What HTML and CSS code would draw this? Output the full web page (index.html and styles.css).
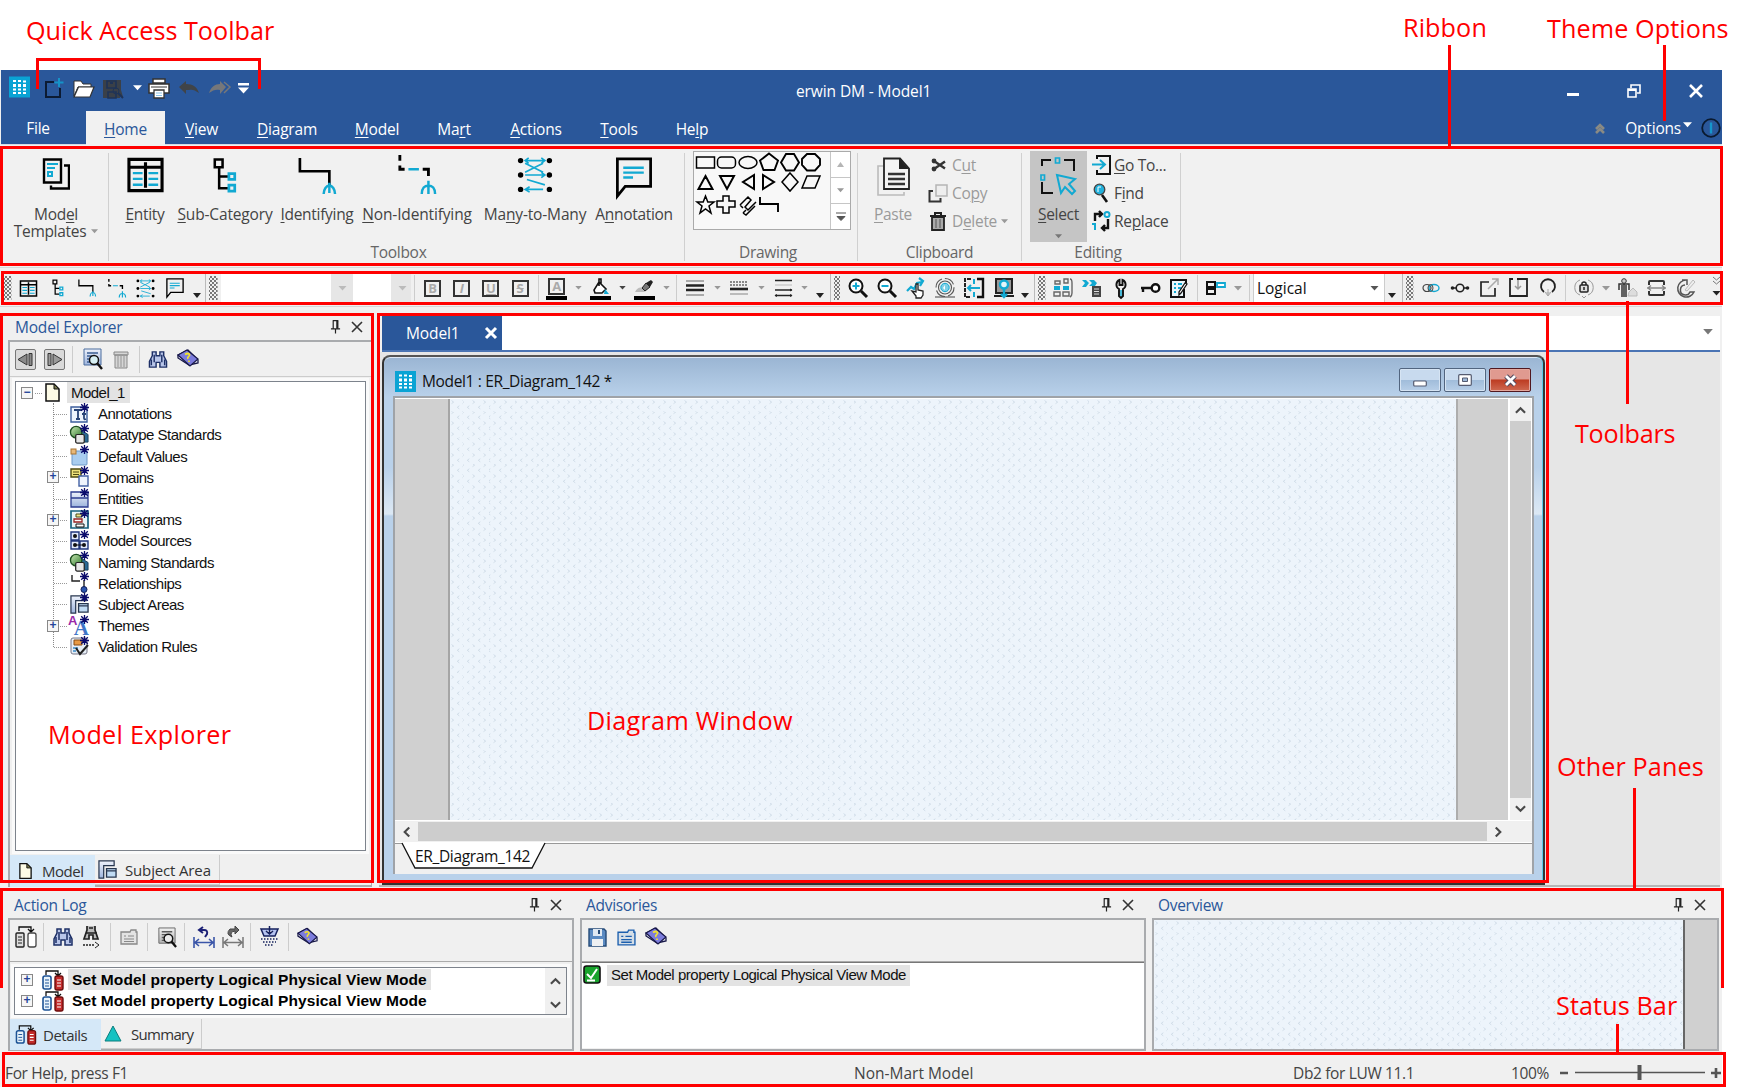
FILE: index.html
```html
<!DOCTYPE html>
<html lang="en">
<head>
<meta charset="utf-8">
<title>erwin DM - Model1</title>
<link rel="stylesheet" href="styles.css">
</head>
<body>
<svg class="defs" width="0" height="0" aria-hidden="true">
<defs>
<linearGradient id="gb" x1="0" y1="0" x2="0" y2="1"><stop offset="0" stop-color="#eef2fb"/><stop offset="1" stop-color="#9db4dd"/></linearGradient>
<linearGradient id="gg" x1="0" y1="0" x2="1" y2="1"><stop offset="0" stop-color="#c9e8b4"/><stop offset="1" stop-color="#2f7a2c"/></linearGradient>
<symbol id="logo" viewBox="0 0 21 21"><path fill="#0aa3d4" d="M0 0h21v21H0z"/><path fill="#fff" d="M4 3.500h3v2H4zM9 3.500h3v2H9zM14 4h3v2h-3zM4 7.500h3v3H4zM9 7.500h3v3H9zM14 7.500h3v3h-3zM4 12h3v2H4zM9 12h3v2H9zM14 12h3v2h-3zM4 15.500h3v2H4zM9 15.500h3v2H9zM14 15.500h3v2h-3z"/></symbol>
<symbol id="star" viewBox="0 0 9 9"><path d="M4.500 0v9M0 4.500h9M1.200 1.200l6.600 6.600M7.800 1.200L1.200 7.800" stroke="#0b0b6b" stroke-width="1.300"/></symbol>
<symbol id="entity" viewBox="0 0 38 36"><path d="M2 2h34v32H2zM2 10h34M19 5v26" fill="none" stroke="#000" stroke-width="3.200"/><path d="M6 16h10M6 22h10M6 28h10M22 16h10M22 22h10M22 28h10" stroke="#12a9d2" stroke-width="2.400"/></symbol>
<symbol id="subcat" viewBox="0 0 26 38"><path d="M2.500 2.500h8v8h-8zM7 11v21h9M7 20h9" fill="none" stroke="#000" stroke-width="2.600"/><path d="M17 17h6v6h-6zM17 29h6v6h-6z" fill="none" stroke="#12a9d2" stroke-width="2.800"/></symbol>
<symbol id="ident" viewBox="0 0 40 40"><path d="M2 1v14h31v15" fill="none" stroke="#000" stroke-width="2.800"/><path d="M33 27v11M27 39c0-5 3-9 6-9s6 4 6 9" fill="none" stroke="#12a9d2" stroke-width="2.600"/></symbol>
<symbol id="nonid" viewBox="0 0 40 42"><path d="M2 0v6M2 11v4h5M26 15h6v7" fill="none" stroke="#000" stroke-width="3"/><path d="M11 15h11M32 27v14M25 41c0-6 3-9 7-9s7 3 7 9" fill="none" stroke="#12a9d2" stroke-width="2.600"/></symbol>
<symbol id="many" viewBox="0 0 38 40"><path d="M8 4h22M8 7l20 10M28 7L8 17M8 20h22M30 31L10 25M8 36h20M26 1l4 3-4 3M12 1L8 4l4 3M26 17l4 3-4 3M13 33l-5 3 5 3" fill="none" stroke="#12a9d2" stroke-width="1.800"/><g fill="#000"><circle cx="3" cy="4" r="3"/><circle cx="35" cy="4" r="3"/><circle cx="3" cy="20" r="3"/><circle cx="35" cy="20" r="3"/><circle cx="3" cy="36" r="3"/><circle cx="35" cy="36" r="3"/></g></symbol>
<symbol id="annot" viewBox="0 0 38 44"><path d="M2 2h34v28H10L2 40z" fill="none" stroke="#000" stroke-width="2.800"/><path d="M8 11h21M8 16h21M8 21h10" stroke="#12a9d2" stroke-width="2.400"/></symbol>
<symbol id="templ" viewBox="0 0 28 32"><path d="M2 2h17v23H2zM22 8h5v23H9v-3" fill="none" stroke="#000" stroke-width="2.400"/><path d="M5 6.500h11M5 10.500h8M6 14.500h4v4H6z" fill="none" stroke="#12a9d2" stroke-width="2"/></symbol>
<symbol id="pin" viewBox="0 0 12 16"><path d="M3 1h6M3.500 1v9M1 10h10M6 10v5" fill="none" stroke="#222" stroke-width="1.300"/><path d="M8 1v9" stroke="#222" stroke-width="2.400"/></symbol>
<symbol id="x" viewBox="0 0 12 12"><path d="M1 1l10 10M11 1L1 11" stroke="currentColor" stroke-width="1.600"/></symbol>
<symbol id="dn" viewBox="0 0 8 5"><path d="M0 0h8L4 4.500z" fill="currentColor"/></symbol>
<symbol id="ovf" viewBox="0 0 8 5"><path d="M0 0h8L4 5z" fill="#222"/></symbol>
<symbol id="binoc" viewBox="0 0 20 20"><path d="M4 2h4v4h4V2h4v4l3 6v6h-7v-5H8v5H1v-6l3-6z" fill="#b9c6ea" stroke="#1d2f66" stroke-width="1.500"/><path d="M3 10v6M6 5v8M14 5v8M17 10v6" stroke="#1d2f66" stroke-width="1.500"/></symbol>
<symbol id="book" viewBox="0 0 22 20"><path d="M1 6l10-5 10 10v3l-9 2L1 9z" fill="#eceff8" stroke="#181848" stroke-width="1.300"/><path d="M1 6l9-5 11 9-8 7z" fill="#7c7cdc" stroke="#181848" stroke-width="1.200"/><path d="M8 5.500q3-2 4.500 0c1 2-3 2-1.500 4.500M12 11.500v1.500" fill="none" stroke="#f2e32b" stroke-width="1.700"/></symbol>
<symbol id="doc" viewBox="0 0 15 19"><path d="M1 1h8l5 5v12H1z" fill="#fdfbe6" stroke="#111" stroke-width="1.500"/><path d="M9 1v5h5z" fill="#77784a" stroke="#111"/></symbol>
<symbol id="find" viewBox="0 0 22 22"><path d="M3 1h17v16H3z" fill="url(#gb)" stroke="#4a6d9e"/><path d="M6 5h11M6 8h6M6 11h4M6 14h3" stroke="#3b5e92" stroke-width="1.400"/><circle cx="13" cy="12" r="4.500" fill="#d8f0f4" stroke="#111" stroke-width="1.500"/><path d="M16 15l5 6" stroke="#111" stroke-width="2.400"/></symbol>
<symbol id="subj" viewBox="0 0 20 20"><path d="M1 19V1h16v5H6v13z" fill="url(#gb)" stroke="#27364f" stroke-width="1.300"/><path d="M9 9h10v9H9zM9 11.500h10" fill="#c0dbf4" stroke="#27364f" stroke-width="1.400"/></symbol>
<symbol id="log" viewBox="0 0 22 22"><path d="M4 6V2h12v4M13 4l3 3 3-3" fill="none" stroke="#111" stroke-width="1.300"/><rect x="1" y="7" width="8" height="13" rx="2" fill="#e8f3fb" stroke="#1d5396" stroke-width="1.600"/><path d="M3 11h4M3 14h4M3 17h4" stroke="#1d5396"/><rect x="13" y="7" width="8" height="14" rx="2" fill="#c22b2b" stroke="#6d0d0d" stroke-width="1.400"/><path d="M15 11h4M15 14h4M15 17h4" stroke="#fff" stroke-width="1.200"/></symbol>
<symbol id="props" viewBox="0 0 18 16"><path d="M1 3h9l1-2h5v2h1v12H1z" fill="currentColor" fill-opacity=".12" stroke="currentColor" stroke-width="1.300"/><path d="M4 7h2M8 7h6M4 10h10M4 12.500h10" stroke="currentColor" stroke-width="1.200"/></symbol>
<symbol id="dtype" viewBox="0 0 22 20"><path d="M12 5l8 5v8h-8z" fill="#2b6a94" stroke="#163e5c"/><circle cx="7.500" cy="7.500" r="6" fill="url(#gg)" stroke="#1d4d1f" stroke-width="1.400"/><rect x="7" y="10" width="9" height="9" rx="1.500" fill="#e7e7e7" stroke="#222" stroke-width="1.300"/></symbol>
<symbol id="cl" viewBox="0 0 12 8"><path d="M1 7l5-5 5 5" fill="none" stroke="#4a4a4a" stroke-width="2.300"/></symbol>
</defs>
</svg>

<div class="app">
  <header class="title">
    <div class="qat">
      <svg class="q-logo" width="21" height="22"><use href="#logo"/></svg>
      <svg class="q-new" width="21" height="22" viewBox="0 0 21 22"><path d="M11 5H3v15h14v-9" fill="none" stroke="#0c1b33" stroke-width="2"/><path d="M16 1v9M11.500 5.500h9" stroke="#1593c8" stroke-width="2"/></svg>
      <svg class="q-open" width="22" height="18" viewBox="0 0 22 18"><path d="M1 16V1h7l2 3h8v3H5z" fill="#fff" stroke="#333"/><path d="M1 17L5.500 7H21l-4 10z" fill="#fff" stroke="#333" stroke-width="1.200"/></svg>
      <svg class="q-save" width="21" height="19" viewBox="0 0 21 19"><path d="M0 0h18v10l2 7-3-1v2H0z" fill="#3a4048"/><path d="M4 1h9v7H4zM5 12h8v6H5z" fill="none" stroke="#1f3357" stroke-width="1.600"/><circle cx="13" cy="11" r="3" fill="none" stroke="#1f3357"/><path d="M7 3h3M15 13l5 5" stroke="#1f3357" stroke-width="2"/></svg>
      <svg class="q-dd" width="9" height="6"><use href="#dn"/></svg>
      <svg class="q-print" width="22" height="21" viewBox="0 0 22 21"><path d="M5 1h12v4H5zM1 6h20v9H1z" fill="#fff" stroke="#333" stroke-width="1.500"/><path d="M3 9h16" stroke="#333"/><path d="M6 12h10v8H6z" fill="#fff" stroke="#333" stroke-width="1.300"/><path d="M8 15h6M8 17.500h6" stroke="#8bc3e8"/></svg>
      <svg class="q-undo" width="21" height="14" viewBox="0 0 21 14"><path d="M0 6L7 0v3c7 0 11 3 13 9-4-3-7-4-10-3H7v4z" fill="#404448"/></svg>
      <svg class="q-redo" width="22" height="14" viewBox="0 0 22 14"><path d="M17 6l-6-6v3C6 3 2 6 0 12c4-3 7-4 11-3v4z" fill="#76777a"/><path d="M15 1l6 5-6 6" fill="none" stroke="#76777a" stroke-width="1.500"/></svg>
      <svg class="q-more" width="11" height="11" viewBox="0 0 11 11"><path d="M0 0h11v2.500H0zM0 4.500h11L5.500 10.500z" fill="#fff"/></svg>
    </div>
    <div class="caption">erwin DM - Model1</div>
    <div class="wctl">
      <svg width="12" height="14" viewBox="0 0 12 14"><path d="M0 9h12v3H0z" fill="#fff"/></svg>
      <svg width="14" height="14" viewBox="0 0 14 14"><path d="M1 5h8v8H1zM4 4V1h9v8h-3" fill="none" stroke="#fff" stroke-width="1.600"/><path d="M1 6h8" stroke="#fff" stroke-width="2"/></svg>
      <svg width="14" height="14" viewBox="0 0 14 14"><path d="M1 1l12 12M13 1L1 13" stroke="#fff" stroke-width="2.600"/></svg>
    </div>
  </header>

  <nav class="tabs">
    <span class="t-file">File</span><span class="on"><u>H</u>ome</span><span class="t-view"><u>V</u>iew</span><span class="t-diag"><u>D</u>iagram</span><span class="t-model"><u>M</u>odel</span><span class="t-mart">Ma<u>r</u>t</span><span class="t-act"><u>A</u>ctions</span><span class="t-tools"><u>T</u>ools</span><span class="t-help">He<u>l</u>p</span>
    <div class="opts">
      <svg width="10" height="9" viewBox="0 0 10 9"><path d="M1 5l4-4 4 4M1 9l4-4 4 4" fill="none" stroke="#8a8a84" stroke-width="2.600"/></svg>
      <span>Options</span>
      <svg class="od" width="9" height="6"><use href="#dn"/></svg>
      <svg width="20" height="20" viewBox="0 0 20 20"><circle cx="10" cy="10" r="8.800" fill="none" stroke="#0a1a30" stroke-width="1.800"/><path d="M10 4.500v11" stroke="#1596cc" stroke-width="2.400"/></svg>
    </div>
  </nav>

  <section class="ribbon">
    <div class="rg g1">
      <div class="rb"><span class="ic"><svg width="28" height="33"><use href="#templ"/></svg></span><span class="l1t">Mod<u>e</u>l</span><span class="l2t">Templates<svg class="sm" width="7" height="5"><use href="#dn"/></svg></span></div>
      <div class="cap"></div>
    </div>
    <div class="rg g2">
      <div class="row">
        <div class="rb b1"><span class="ic"><svg width="37" height="36"><use href="#entity"/></svg></span><span><u>E</u>ntity</span></div>
        <div class="rb b2"><span class="ic"><svg width="26" height="37"><use href="#subcat"/></svg></span><span><u>S</u>ub-Category</span></div>
        <div class="rb b3"><span class="ic"><svg width="40" height="38"><use href="#ident"/></svg></span><span><u>I</u>dentifying</span></div>
        <div class="rb b4"><span class="ic up"><svg width="40" height="40"><use href="#nonid"/></svg></span><span><u>N</u>on-Identifying</span></div>
        <div class="rb b5"><span class="ic"><svg width="38" height="36" preserveAspectRatio="none"><use href="#many"/></svg></span><span>Ma<u>n</u>y-to-Many</span></div>
        <div class="rb b6"><span class="ic up"><svg width="38" height="43"><use href="#annot"/></svg></span><span>A<u>n</u>notation</span></div>
      </div>
      <div class="cap">Toolbox</div>
    </div>
    <div class="rg g3">
      <div class="gallery">
        <svg width="136" height="76" viewBox="0 0 136 76" fill="none" stroke="#000" stroke-width="1.500">
          <rect x="2.500" y="6" width="18" height="11"/><rect x="23.500" y="6" width="18" height="11" rx="4"/><ellipse cx="54" cy="11.500" rx="9" ry="6"/>
          <path stroke-width="1.900" d="M75 2.500l9 7-3.500 9.500h-11L66 9.500zM92 3h8l5 8.500-5 8h-8l-5-8zM113 3h8l5 5v6l-5 5.500h-8l-5-5.500V8z"/>
          <path stroke-width="2" d="M11.500 25l7 13h-14zM26 25h14l-7 13zM60 24v14l-11-7zM69 24v14l11-7z"/><path d="M96 22l8 9-8 9-8-9zM113 25h13l-5 12h-13z"/>
          <path d="M11.500 45l2.300 6h6.200l-5 4 2 7-5.500-4L6 62l2-7-5-4h6.200zM29 45h6v5h6v6h-6v6h-6v-6h-6v-6h6zM46 54l8-8 3 3-6 7 3 3 8-8M46 54l3 3M49 62l3 2 9-9M49 62l3-3"/><path stroke-width="1.900" d="M66 46v7h18v8"/>
        </svg>
        <div class="gs"><i><svg class="sm" width="7" height="5" viewBox="0 0 7 5"><path d="M0 5h7L3.500 0z" fill="#b5b5b5"/></svg></i><i><svg class="sm" width="7" height="5"><use href="#dn"/></svg></i><i><svg width="10" height="10" viewBox="0 0 10 10"><path d="M0 1h10M1 4.500h8L5 8.500z" fill="#555" stroke="#555"/></svg></i></div>
      </div>
      <div class="cap">Drawing</div>
    </div>
    <div class="rg g4">
      <div class="row">
        <div class="rb paste"><span class="ic"><svg width="33" height="40" viewBox="0 0 33 40"><path d="M6 9H1v29h26v-3" fill="none" stroke="#bbb" stroke-width="1.600"/><path d="M7 1.500h16l9 10V32H7z" fill="#f4f4f4" stroke="#222" stroke-width="1.800"/><path d="M22 1v11h10z" fill="#222"/><path d="M11 17h17M11 22h17M11 27h17" stroke="#333" stroke-width="2.600"/></svg></span><span><u>P</u>aste</span></div>
        <div class="col dis">
          <div><i><svg width="15" height="14" viewBox="0 0 15 14"><path d="M3 3l11 7.500M3 11l11-7.500" stroke="#333" stroke-width="2.400"/><circle cx="3" cy="3" r="2.400" fill="#333"/><circle cx="3" cy="11" r="2.400" fill="#333"/></svg></i><span>C<u>u</u>t</span></div>
          <div><i><svg width="20" height="19" viewBox="0 0 20 19"><path d="M8 1h11v11H8z" fill="#eee" stroke="#b5b5b5" stroke-width="1.500"/><path d="M5 7H1.500v10.500h11V14" fill="none" stroke="#333" stroke-width="2"/></svg></i><span>Co<u>p</u>y</span></div>
          <div><i><svg width="16" height="19" viewBox="0 0 16 19"><path d="M0 4h16M5 3V1h6v2" fill="none" stroke="#222" stroke-width="2"/><path d="M2 5h12v13H2z" fill="#aaa" stroke="#222" stroke-width="1.800"/><path d="M6 7v9M10 7v9" stroke="#555"/></svg></i><span>D<u>e</u>lete</span><svg class="sm" width="7" height="5"><use href="#dn"/></svg></div>
        </div>
      </div>
      <div class="cap">Clipboard</div>
    </div>
    <div class="rg g5">
      <div class="row">
        <div class="rb sel"><span class="ic"><svg width="37" height="38" viewBox="0 0 37 38"><path d="M2 9V3h9M24 3h10v11M2 25v11h11" fill="none" stroke="#111" stroke-width="2"/><path d="M15.500 1h4v5h-4zM1 18h3.500v5H1z" fill="none" stroke="#12a9d2" stroke-width="1.700"/><path d="M17 18l18 4-6 5 6 7-3 3-7-7-4 6z" fill="none" stroke="#12a9d2" stroke-width="2"/></svg></span><span><u>S</u>elect</span><svg class="sm" width="7" height="5"><use href="#dn"/></svg></div>
        <div class="col ed">
          <div><i><svg width="19" height="20" viewBox="0 0 19 20"><path d="M5 4V1h13v18H5v-4" fill="none" stroke="#111" stroke-width="2"/><path d="M0 9.500h12M8 5l5 4.500L8 14" fill="none" stroke="#12a9d2" stroke-width="2"/></svg></i><span><u>G</u>o To...</span></div>
          <div><i><svg width="16" height="20" viewBox="0 0 16 20"><circle cx="6.500" cy="6.500" r="5.300" fill="#22b1dc" stroke="#444" stroke-width="1.300"/><path d="M5 9V4h3" stroke="#fff" fill="none"/><path d="M9 12l5 7" stroke="#111" stroke-width="2.600"/></svg></i><span>F<u>i</u>nd</span></div>
          <div><i><svg width="19" height="20" viewBox="0 0 19 20"><path d="M3 10V3h6M7 0l3 3-3 3M16 8v9h-5M13 14l-3 3 3 3" fill="none" stroke="#111" stroke-width="2.400"/><circle cx="15" cy="3.500" r="2.500" fill="none" stroke="#12a9d2" stroke-width="2"/><path d="M3 12v7M0 13h3" stroke="#12a9d2" stroke-width="2"/></svg></i><span>Re<u>p</u>lace</span></div>
        </div>
      </div>
      <div class="cap">Editing</div>
    </div>
  </section>

  <section class="bars">
    <div class="tb k1"><b class="grip"></b>
      <i><svg width="19" height="17"><use href="#entity"/></svg></i>
      <i><svg width="14" height="18"><use href="#subcat"/></svg></i>
      <i><svg width="20" height="18"><use href="#ident"/></svg></i>
      <i><svg width="20" height="19"><use href="#nonid"/></svg></i>
      <i><svg width="19" height="19"><use href="#many"/></svg></i>
      <i><svg width="20" height="21"><use href="#annot"/></svg></i>
      <em><svg width="8" height="5"><use href="#ovf"/></svg></em>
    </div>
    <div class="tb k2"><b class="grip"></b>
      <div class="cb c1"><svg width="9" height="5"><use href="#dn"/></svg></div><div class="cb c2"><svg width="9" height="5"><use href="#dn"/></svg></div>
      <s></s>
      <i><span class="bx">B</span></i><i><span class="bx it">I</span></i><i><span class="bx un">U</span></i><i><span class="bx st">S</span></i>
      <s></s>
      <i class="ul"><span class="bx">A</span></i><em class="a"><svg width="7" height="4"><use href="#dn"/></svg></em>
      <i class="ul"><svg width="18" height="17" viewBox="0 0 18 17"><path d="M7 4l7 7-4 4H3l-1-3zM7 8V1h2v6" fill="#fff" stroke="#111" stroke-width="1.600"/><path d="M13 11l4 5h-5z" fill="#12a9d2"/></svg></i><em class="a dk"><svg width="7" height="4"><use href="#dn"/></svg></em>
      <i class="ul"><svg width="20" height="16" viewBox="0 0 20 16"><path d="M1 13q3-6 8-4l2 4z" fill="#bbb"/><path d="M8 9l4-5 4 4-5 4z" fill="#777" stroke="#222"/><path d="M12 4l5-3 2 2-3 5z" fill="#222"/></svg></i><em class="a"><svg width="7" height="4"><use href="#dn"/></svg></em>
      <s></s>
      <i><svg width="18" height="18" viewBox="0 0 18 18"><path d="M0 2h18M0 16h18" stroke="#aaa" stroke-width="2"/><path d="M0 6.500h18M0 11h18" stroke="#222" stroke-width="2.400"/></svg></i><em class="a"><svg width="7" height="4"><use href="#dn"/></svg></em>
      <i><svg width="18" height="18" viewBox="0 0 18 18"><path d="M0 3h18M0 6h18" stroke="#888" stroke-width="2" stroke-dasharray="2 1"/><path d="M0 10h18" stroke="#222" stroke-width="2.600"/><path d="M0 15h18" stroke="#bbb" stroke-width="2"/></svg></i><em class="a"><svg width="7" height="4"><use href="#dn"/></svg></em>
      <i><svg width="19" height="18" viewBox="0 0 19 18"><path d="M1 1.500h17M1 11h17M1 16.500h17" stroke="#222" stroke-width="1.500"/><path d="M1 6h17" stroke="#ccc" stroke-width="1.500"/><path d="M16 9.500l2.500 1.500-2.500 1.500zM16 15l2.500 1.500L16 18zM3 15L.5 16.500 3 18z" fill="#222"/></svg></i><em class="a"><svg width="7" height="4"><use href="#dn"/></svg></em>
      <em class="e2"><svg width="8" height="5"><use href="#ovf"/></svg></em>
    </div>
    <div class="tb k3"><b class="grip"></b>
      <i><svg width="20" height="20" viewBox="0 0 20 20"><circle cx="8" cy="8" r="6.500" fill="#fff" stroke="#111" stroke-width="2"/><path d="M8 4.500v7M4.500 8h7" stroke="#12a9d2" stroke-width="2"/><path d="M13 13l6 6" stroke="#111" stroke-width="3"/></svg></i>
      <i><svg width="20" height="20" viewBox="0 0 20 20"><circle cx="8" cy="8" r="6.500" fill="#fff" stroke="#111" stroke-width="2"/><path d="M4.500 8h7" stroke="#12a9d2" stroke-width="2"/><path d="M13 13l6 6" stroke="#111" stroke-width="3"/></svg></i>
      <i><svg width="18" height="20" viewBox="0 0 18 20"><path d="M0 13l4-4 3 2 3-6 5-1M12 0l4 3-3 5" fill="none" stroke="#12a9d2" stroke-width="2.200"/><path d="M9 18l-4-5 4 1V6h2v6l5 1v4l-2 3H9z" fill="#fff" stroke="#222" stroke-width="1.300"/></svg></i>
      <i><svg width="20" height="20" viewBox="0 0 20 20"><g fill="none" stroke="#555" stroke-width="1.100"><circle cx="10" cy="9.500" r="9" stroke-dasharray="11 3"/><circle cx="10" cy="9.500" r="6.500"/><path d="M0 19h20"/></g><circle cx="10" cy="9.500" r="4.200" fill="#7fd0e6" stroke="#12a9d2"/><path d="M8 10l2-3v5z" fill="#fff"/></svg></i>
      <i><svg width="20" height="20" viewBox="0 0 20 20"><path d="M7 1H1v18h6" fill="none" stroke="#222" stroke-width="2" stroke-dasharray="4 1"/><path d="M13 1h6v18h-6" fill="none" stroke="#111" stroke-width="2.400"/><path d="M10 1v5M10 14v5M4 10h12M7 7l-3 3 3 3" fill="none" stroke="#12a9d2" stroke-width="2"/></svg></i>
      <i><svg width="20" height="20" viewBox="0 0 20 20"><path d="M2 1h16v14H2zM0 18h20" fill="#999" stroke="#222" stroke-width="2"/><circle cx="10" cy="6.500" r="4" fill="#e3f5fa" stroke="#12a9d2" stroke-width="2.400"/><path d="M10 11v8M7 16l3 3 3-3" fill="none" stroke="#12a9d2" stroke-width="2.400"/></svg></i>
      <em><svg width="8" height="5"><use href="#ovf"/></svg></em>
    </div>
    <div class="tb k4"><b class="grip"></b>
      <i><svg width="20" height="20" viewBox="0 0 20 20"><path d="M1 8h6v4H1zM10 8h6v4h-6z" fill="#12a9d2"/><path d="M1 14h6v4H1zM10 14h6v4h-6zM2 3h5v3H2zM11 1h4v4h-4zM17 1q2 0 2 4v10q0 3-2 4" fill="none" stroke="#666" stroke-width="1.400"/></svg></i>
      <i><svg width="20" height="19" viewBox="0 0 20 19"><path d="M0 1h4l3 3-3 4H0l3-4zM7 1h5l3 3-2 3H7l3-3z" fill="#12a9d2"/><path d="M10 7h9v11h-9z" fill="#444"/><path d="M12 10h5M12 12.500h5M12 15h5" stroke="#ddd"/></svg></i>
      <i><svg width="12" height="19" viewBox="0 0 12 19"><path d="M4.500 1A5 5 0 0 0 4 10v7l2 2 2-2v-7a5 5 0 0 0-.5-9v5h-3z" fill="#eee" stroke="#111" stroke-width="1.900"/><path d="M6 11v6" stroke="#12a9d2" stroke-width="1.500"/></svg></i>
      <i><svg width="20" height="10" viewBox="0 0 20 10"><circle cx="14.500" cy="5" r="3.800" fill="#fff" stroke="#111" stroke-width="2.400"/><path d="M0 5h11M2 5v4" stroke="#111" stroke-width="2.400"/></svg></i>
      <i><svg width="19" height="19" viewBox="0 0 19 19"><path d="M14 10v8H1V1h15v3" fill="#eaf6fa" stroke="#111" stroke-width="2"/><path d="M4 5h2M8 5h4M4 9h2M8 9h3M4 13h2" stroke="#12a9d2" stroke-width="1.800"/><path d="M17 5l-6 9-2 2v-3l6-9z" fill="#fff" stroke="#111" stroke-width="1.300"/></svg></i>
      <s></s>
      <i><svg width="20" height="14" viewBox="0 0 20 14"><path d="M1 1h8v5H1zM1 8h8v5H1z" fill="none" stroke="#111" stroke-width="2"/><path d="M11 2h8v4h-8z" fill="#fff" stroke="#12a9d2" stroke-width="1.800"/></svg></i><em class="a"><svg width="8" height="5"><use href="#dn"/></svg></em>
      <s></s>
      <div class="lg">Logical<svg width="9" height="5"><use href="#dn"/></svg></div>
      <em><svg width="8" height="5"><use href="#ovf"/></svg></em>
    </div>
    <div class="tb k5"><b class="grip"></b>
      <i><svg width="18" height="10" viewBox="0 0 18 10"><ellipse cx="5" cy="5" rx="4" ry="3.500" fill="#eee" stroke="#444" stroke-width="1.200"/><ellipse cx="12" cy="5" rx="5" ry="3.500" fill="none" stroke="#12a9d2" stroke-width="1.400"/><ellipse cx="8.500" cy="5" rx="2.500" ry="3.500" fill="none" stroke="#444"/></svg></i>
      <i><svg width="20" height="10" viewBox="0 0 20 10"><circle cx="10" cy="5" r="3.800" fill="none" stroke="#222" stroke-width="1.600"/><path d="M1 5h5M14 5h5" stroke="#222" stroke-width="1.600"/><circle cx="2.500" cy="5" r="1.800" fill="#222"/><circle cx="17.500" cy="5" r="1.800" fill="#222"/></svg></i>
      <i><svg width="19" height="20" viewBox="0 0 19 20"><path d="M9 4H1v14h14v-8" fill="none" stroke="#222" stroke-width="1.700"/><path d="M8 11L18 1M12 1h6v6" fill="none" stroke="#aaa" stroke-width="1.500"/></svg></i>
      <i><svg width="19" height="20" viewBox="0 0 19 20"><path d="M4 1H1v17h17V1H8" fill="none" stroke="#222" stroke-width="1.800"/><path d="M9 2v9M6 8l3 3 3-3" fill="none" stroke="#999" stroke-width="1.500"/></svg></i>
      <i><svg width="18" height="20" viewBox="0 0 18 20"><path d="M5 14a7 7 0 1 1 8 0" fill="none" stroke="#222" stroke-width="1.800"/><path d="M9 11v7M6 14l3 4 3-4" fill="#ccc" stroke="#aaa"/></svg></i>
      <s></s>
      <i><svg width="20" height="20" viewBox="0 0 20 20"><path d="M6 2a8 8 0 0 0 0 15M14 2a8 8 0 0 1 0 15M8 18l2 2 2-2" fill="none" stroke="#999"/><rect x="6" y="7" width="8" height="7" rx="1" fill="#ddd" stroke="#222" stroke-width="1.500"/><path d="M8 7V5q2-2 4 0v2M10 9v3" fill="none" stroke="#222" stroke-width="1.500"/></svg></i><em class="a"><svg width="8" height="5"><use href="#dn"/></svg></em>
      <i><svg width="20" height="20" viewBox="0 0 20 20"><circle cx="6" cy="3" r="2.300" fill="#ccc" stroke="#333"/><path d="M1 12V6h10v6M4 7v12M6 6v13M8 7v12" fill="none" stroke="#333" stroke-width="1.500"/><path d="M10 18h9v-4l-4-4-4 4z" fill="#ddd" stroke="#bbb"/></svg></i>
      <i><svg width="20" height="16" viewBox="0 0 20 16"><path d="M2 5V2q0-1 1-1h13q1 0 1 1v3M2 11v3q0 1 1 1h13q1 0 1-1v-3" fill="none" stroke="#333" stroke-width="2"/><path d="M0 8h19M4 5.500L1 8l3 2.500M15 5.500L18 8l-3 2.500" fill="none" stroke="#888" stroke-width="1.400"/></svg></i>
      <i><svg width="19" height="20" viewBox="0 0 19 20"><path d="M9 2a8.500 8.500 0 1 0 8 12h-4a5 5 0 1 1-5-7M5 2h5v5" fill="none" stroke="#555" stroke-width="1.500"/><path d="M8 12l8-10 2 2-8 9z" fill="#eee" stroke="#bbb"/></svg></i>
      <em class="last"><svg width="9" height="20" viewBox="0 0 9 20"><path d="M1 1l3.500 3L8 1M1 5l3.500 3L8 5" fill="none" stroke="#777"/><path d="M.5 15h8l-4 4.500z" fill="#222"/></svg></em>
    </div>
  </section>

  <main class="work">
    <aside class="explorer">
      <div class="ph"><span>Model Explorer</span><svg class="p" width="11" height="16"><use href="#pin"/></svg><svg width="12" height="12"><use href="#x"/></svg></div>
      <div class="pbody">
        <div class="ptb">
          <i><svg width="21" height="21" viewBox="0 0 21 21"><rect x=".5" y=".5" width="20" height="20" rx="1.500" fill="#d9d9d9" stroke="#777"/><path d="M12 5v11L3 10.500zM14 4.500h3v12h-3z" fill="#8a8a8a" stroke="#333"/></svg></i>
          <i><svg width="21" height="21" viewBox="0 0 21 21"><rect x=".5" y=".5" width="20" height="20" rx="1.500" fill="#d9d9d9" stroke="#777"/><path d="M9 5v11l9-5.500zM4 4.500h3v12H4z" fill="#9a9a9a" stroke="#333"/></svg></i><s></s>
          <i><svg width="22" height="22"><use href="#find"/></svg></i>
          <i><svg width="16" height="19" viewBox="0 0 16 19"><path d="M1 2h14v3H1zM2 5h12v13H2z" fill="#d6d6d6" stroke="#888"/><path d="M5 6v11M8 6v11M11 6v11" stroke="#aaa" stroke-width="1.500"/></svg></i><s></s>
          <i><svg width="20" height="19"><use href="#binoc"/></svg></i>
          <i><svg width="22" height="20"><use href="#book"/></svg></i>
        </div>
        <div class="tree">
          <div class="tr root"><b class="ex">−</b><svg class="d" width="15" height="19"><use href="#doc"/></svg><span class="hl">Model_1</span></div>
          <div class="kids">
            <div class="tr"><b></b><i><svg width="19" height="19" viewBox="0 0 19 19"><path d="M1 3h16v15H1z" fill="#eef4fd" stroke="#3c5e9c" stroke-width="1.400"/><path d="M4 6h8M8 6v9M6 15h4M14 8v6q0 2 2 1M12 10h4" stroke="#274376" stroke-width="1.800" fill="none"/></svg><svg class="s" width="9" height="9"><use href="#star"/></svg></i>Annotations</div>
            <div class="tr"><b></b><i><svg width="21" height="19"><use href="#dtype"/></svg><svg class="s" width="9" height="9"><use href="#star"/></svg></i>Datatype Standards</div>
            <div class="tr"><b></b><i><svg width="19" height="19" viewBox="0 0 19 19"><rect x="2" y="4" width="15" height="14" rx="1" fill="#a9cdf0" stroke="#6c98c8"/><rect x="1" y="2" width="5" height="5" fill="#e8b878" stroke="#a87432"/></svg><svg class="s" width="9" height="9"><use href="#star"/></svg></i>Default Values</div>
            <div class="tr"><b class="ex">+</b><i><svg width="19" height="19" viewBox="0 0 19 19"><path d="M1 1h10v8H1z" fill="#efe27a" stroke="#4d4a12" stroke-width="1.400"/><path d="M3 4h6M3 6.500h6" stroke="#4d4a12"/><path d="M9 8h9v10H9z" fill="#eef4fd" stroke="#4462a4" stroke-width="1.400"/></svg><svg class="s" width="9" height="9"><use href="#star"/></svg></i>Domains</div>
            <div class="tr"><b></b><i><svg width="19" height="19" viewBox="0 0 19 19"><path d="M1 3h17v15H1z" fill="url(#gb)" stroke="#2d3d90" stroke-width="1.300"/><path d="M1 9h17" stroke="#2d3d90" stroke-width="1.500"/></svg><svg class="s" width="9" height="9"><use href="#star"/></svg></i>Entities</div>
            <div class="tr"><b class="ex">+</b><i><svg width="19" height="19" viewBox="0 0 19 19"><path d="M1 1h17v17H1z" fill="#e9f5f8" stroke="#16607e" stroke-width="1.700"/><path d="M6 4h6v3H6z" fill="#f1e38b" stroke="#4b4b19"/><path d="M4 9h8v3H4z" fill="#fff" stroke="#922" stroke-width="1.300"/><path d="M6 14h8v3H6z" fill="#fff" stroke="#111"/></svg><svg class="s" width="9" height="9"><use href="#star"/></svg></i>ER Diagrams</div>
            <div class="tr"><b></b><i><svg width="19" height="19" viewBox="0 0 19 19"><path d="M1 1h8v8H1zM1 10h8v8H1zM10 10h8v8h-8z" fill="#e1e9fa" stroke="#20367d" stroke-width="1.400"/><g fill="#111"><circle cx="5" cy="5" r="2"/><circle cx="5" cy="14" r="2"/><circle cx="14" cy="14" r="2"/></g><path d="M5 14h9" stroke="#111"/></svg><svg class="s" width="9" height="9"><use href="#star"/></svg></i>Model Sources</div>
            <div class="tr"><b></b><i><svg width="21" height="19"><use href="#dtype"/></svg><svg class="s" width="9" height="9"><use href="#star"/></svg></i>Naming Standards</div>
            <div class="tr"><b></b><i><svg width="19" height="19" viewBox="0 0 19 19"><path d="M2 1v6h8M14 6v8" fill="none" stroke="#222" stroke-width="1.400"/><circle cx="14" cy="15.500" r="3" fill="#2b55ae" stroke="#111d58"/></svg><svg class="s" width="9" height="9"><use href="#star"/></svg></i>Relationships</div>
            <div class="tr"><b></b><i><svg width="19" height="19"><use href="#subj"/></svg><svg class="s" width="9" height="9"><use href="#star"/></svg></i>Subject Areas</div>
            <div class="tr"><b class="ex">+</b><i class="th"><em>A</em><strong>A</strong><svg class="s" width="9" height="9"><use href="#star"/></svg></i>Themes</div>
            <div class="tr"><b></b><i><svg width="19" height="19" viewBox="0 0 19 19"><rect x="1" y="1" width="16" height="16" rx="2" fill="#e6eef6" stroke="#778"/><path d="M4 3h8v5H4z" fill="#e89a45" stroke="#8a4c14"/><path d="M3 11h5M3 14h3" stroke="#3a8ac8" stroke-width="1.500"/><path d="M6 11l4 6 8-9" fill="none" stroke="#222" stroke-width="2"/></svg><svg class="s" width="9" height="9"><use href="#star"/></svg></i>Validation Rules</div>
          </div>
        </div>
        <div class="btabs"><span class="on"><svg width="13" height="18"><use href="#doc"/></svg>Model</span><span class="off sa"><svg width="19" height="19"><use href="#subj"/></svg>Subject Area</span></div>
      </div>
    </aside>

    <section class="mdi">
      <div class="dtabs"><span>Model1<svg width="12" height="12" viewBox="0 0 12 12"><path d="M1 1l10 10M11 1L1 11" stroke="#fff" stroke-width="3"/></svg></span><em><svg width="10" height="6"><use href="#dn"/></svg></em></div>
      <div class="area">
        <div class="win">
          <div class="wt"><svg width="21" height="21"><use href="#logo"/></svg><span>Model1 : ER_Diagram_142 *</span>
            <b><svg width="14" height="8" viewBox="0 0 14 8"><rect x=".7" y="2" width="12.600" height="5" rx="1" fill="#fff" stroke="#555b70" stroke-width="1.200"/></svg></b>
            <b><svg width="14" height="12" viewBox="0 0 14 12"><rect x=".7" y=".7" width="12.600" height="10.600" rx="1" fill="#fff" stroke="#555b70" stroke-width="1.200"/><path d="M4.500 4h5v3.500h-5z" fill="#9db8d6" stroke="#555b70"/></svg></b>
            <b class="rd"><svg width="15" height="13" viewBox="0 0 15 13"><path d="M3 2l9 9M12 2l-9 9" stroke="#554a5c" stroke-width="5"/><path d="M3 2l9 9M12 2l-9 9" stroke="#fff" stroke-width="2.800"/></svg></b>
          </div>
          <div class="wc">
            <div class="view">
              <div class="gut l"></div><div class="dots"></div><div class="gut r"></div>
              <div class="vs"><i><svg width="11" height="8"><use href="#cl"/></svg></i><b></b><i class="f"><svg width="11" height="8"><use href="#cl"/></svg></i></div>
            </div>
            <div class="hs"><i class="tl"><svg width="11" height="8"><use href="#cl"/></svg></i><b></b><i class="trt"><svg width="11" height="8"><use href="#cl"/></svg></i></div>
            <div class="sheet"><svg width="144" height="26" viewBox="0 0 144 26"><path d="M0-1l13 25h117L143-1z" fill="#fff"/><path d="M0-1l13 25h117L143-1" fill="none" stroke="#111" stroke-width="1.300"/></svg><span>ER_Diagram_142</span></div>
          </div>
        </div>
      </div>
    </section>
  </main>

  <section class="panes">
    <div class="pane alog">
      <div class="ph"><span>Action Log</span><svg class="p" width="11" height="16"><use href="#pin"/></svg><svg width="12" height="12"><use href="#x"/></svg></div>
      <div class="pb">
        <div class="ptb">
          <i><svg width="22" height="24" viewBox="0 0 22 24"><path d="M4 6V2h12v4M13 4l3 3 3-3" fill="none" stroke="#111" stroke-width="1.300"/><rect x="1" y="8" width="8" height="14" rx="1" fill="#ddd" stroke="#222" stroke-width="1.400"/><rect x="13" y="8" width="8" height="14" rx="2" fill="#fff" stroke="#444" stroke-width="1.300"/><path d="M3 12h4M3 15h4M3 18h4" stroke="#222"/></svg></i><s></s>
          <i><svg width="20" height="20"><use href="#binoc"/></svg></i>
          <i><svg width="17" height="24" viewBox="0 0 17 24"><path d="M4 1v4L1 14h5v-4h4v4h5L12 5V1M6 3h4M3 8h11" fill="#bbb" stroke="#222" stroke-width="1.700"/><path d="M0 20h12" stroke="#222" stroke-width="1.500" stroke-dasharray="2 1"/><path d="M12 17l4 3-4 3" fill="none" stroke="#222"/></svg></i><s></s>
          <i class="gy"><svg width="18" height="16"><use href="#props"/></svg></i><s></s>
          <i class="mono"><svg width="21" height="21"><use href="#find"/></svg></i><s></s>
          <i><svg width="22" height="24" viewBox="0 0 22 24"><path d="M1 12v11M21 12v11M3 17.500h16M6 14l-4 3.500L6 21M16 14l4 3.500-4 3.500" fill="none" stroke="#3a55a8" stroke-width="1.600"/><path d="M10 2L6 5l4 3M7 5h4q4 0 3 4l-2 3" fill="none" stroke="#1c2176" stroke-width="2"/></svg></i>
          <i><svg width="22" height="24" viewBox="0 0 22 24"><path d="M1 12v11M21 12v11M3 17.500h16M6 14l-4 3.500L6 21M16 14l4 3.500-4 3.500" fill="none" stroke="#777" stroke-width="1.500"/><path d="M10 12Q3 9 8 4h5V1l4 4-4 4V6Q7 7 10 12z" fill="#666" stroke="#444"/></svg></i><s></s>
          <i><svg width="19" height="22" viewBox="0 0 19 22"><path d="M1 3h17l-3 7H4zM9.500 0v8M6 5l3.500 3L13 5" fill="#b4c2f0" stroke="#14205c" stroke-width="1.500"/><path d="M1 13h17M3 16h13M5 19h9" stroke="#14205c" stroke-width="1.400" stroke-dasharray="1.500 1.500"/></svg></i><s></s>
          <i><svg width="21" height="20"><use href="#book"/></svg></i>
        </div>
        <div class="list">
          <div class="items">
            <div><b class="ex">+</b><svg width="22" height="22"><use href="#log"/></svg><span class="hl">Set Model property Logical Physical View Mode</span></div>
            <div><b class="ex">+</b><svg width="22" height="22"><use href="#log"/></svg><span>Set Model property Logical Physical View Mode</span></div>
          </div>
          <div class="lsb"><svg width="11" height="8"><use href="#cl"/></svg><svg class="f" width="11" height="8"><use href="#cl"/></svg></div>
        </div>
        <div class="btabs"><span class="on"><svg width="22" height="21"><use href="#log"/></svg>Details</span><span class="off su"><svg width="18" height="17" viewBox="0 0 18 17"><path d="M9 1l8 15H1z" fill="#14c2c2" stroke="#0b7d7d"/></svg>Summary</span></div>
      </div>
    </div>
    <div class="pane adv">
      <div class="ph"><span>Advisories</span><svg class="p" width="11" height="16"><use href="#pin"/></svg><svg width="12" height="12"><use href="#x"/></svg></div>
      <div class="pb">
        <div class="ptb">
          <i><svg width="19" height="19" viewBox="0 0 19 19"><path d="M1 1h15l2 2v15H1z" fill="#5a8ac2" stroke="#264b78" stroke-width="1.400"/><path d="M5 1h9v7H5z" fill="#dfe8f2"/><path d="M11 2v4" stroke="#264b78" stroke-width="2"/><path d="M4 11h11v7H4z" fill="#eef0f2"/></svg></i>
          <i class="bl"><svg width="19" height="17"><use href="#props"/></svg></i>
          <i><svg width="22" height="20"><use href="#book"/></svg></i>
        </div>
        <div class="alist"><svg width="18" height="19" viewBox="0 0 18 19"><rect x="1" y="1" width="16" height="17" rx="2.500" fill="#18a32c" stroke="#111" stroke-width="1.600"/><path d="M4 9l4 4 6-9M4 15.500h8" fill="none" stroke="#fff" stroke-width="2"/></svg><span class="hl">Set Model property Logical Physical View Mode</span></div>
      </div>
    </div>
    <div class="pane over">
      <div class="ph"><span>Overview</span><svg class="p" width="11" height="16"><use href="#pin"/></svg><svg width="12" height="12"><use href="#x"/></svg></div>
      <div class="pb"><div class="dots"></div><div class="gut"></div></div>
    </div>
  </section>

  <footer class="status">
    <span class="s1">For Help, press F1</span><span class="s2">Non-Mart Model</span><span class="s3">Db2 for LUW 11.1</span><span class="s4">100%</span>
    <svg width="160" height="18" viewBox="0 0 160 18"><path d="M0 9h8M151 9h10M156 4v10" stroke="#555" stroke-width="2.600"/><path d="M15 8.500h130" stroke="#555" stroke-width="1.500"/><path d="M79.500 1v15" stroke="#555" stroke-width="4"/></svg>
  </footer>
</div>

<div class="notes">
  <div class="box n-rib"></div><div class="box n-bar"></div><div class="box n-exp"></div><div class="box n-dia"></div><div class="box n-pan"></div><div class="box n-sta"></div><div class="box n-qat"></div>
  <div class="ln l1"></div><div class="ln l2"></div><div class="ln l3"></div><div class="ln l4"></div><div class="ln l5"></div>
  <span class="x1">Quick Access Toolbar</span><span class="x2">Ribbon</span><span class="x3">Theme Options</span><span class="x4">Toolbars</span><span class="x5">Model Explorer</span><span class="x6">Diagram Window</span><span class="x7">Other Panes</span><span class="x8">Status Bar</span>
</div>
</body>
</html>
```
FILE: styles.css
```css
* { box-sizing: border-box; }
body { margin: 0; background: #fff; width: 1758px; height: 1087px; overflow: hidden; position: relative; font: 15.5px/18px "Open Sans", "Noto Sans", sans-serif; letter-spacing: -.3px; color: #444; }
svg { display: block; overflow: visible; flex: none; }
.defs { position: absolute; }
i, em, b { font-style: normal; flex: none; }
u { text-underline-offset: 2px; text-decoration-thickness: 1px; }
.app { width: 1722px; margin-top: 70px; height: 1017px; background: #f0f0f0; display: flex; flex-direction: column; }
.sm { color: #999; display: inline-block; vertical-align: middle; }

.title { height: 37px; flex: none; margin-left: 1px; background: #2a579a; color: #fff; display: flex; align-items: center; padding-top: 4px; }
.qat { display: flex; align-items: center; width: 795px; padding-left: 8px; height: 26px; margin-top: -5px; color: #fff; }
.q-logo { margin-top: -3px; }
.q-new { margin-left: 13px; }
.q-open { margin: 2px 0 0 9px; }
.q-save { margin: 2px 0 0 8px; }
.q-dd { margin-left: 9px; }
.q-print { margin-left: 6px; }
.q-undo { margin-left: 9px; }
.q-redo { margin-left: 9px; }
.q-more { margin-left: 7px; }
.caption { width: 771px; letter-spacing: -.1px; }
.wctl { display: flex; gap: 48px; align-items: center; }

.tabs { height: 38px; flex: none; margin-left: 1px; background: #2a579a; color: #fff; display: flex; padding-top: 4px; border-bottom: 1px solid #d5dbe4; }
.tabs > span { text-align: center; line-height: 36px; height: 33px; flex: none; letter-spacing: -.2px; }
.tabs .t-file { width: 74px; margin-right: 11px; line-height: 34px; }
.tabs .on { width: 79px; background: #f1f1f1; color: #2a579a; height: 34px; }
.t-view { width: 73px; } .t-diag { width: 98px; } .t-model { width: 82px; } .t-mart { width: 72px; } .t-act { width: 92px; } .t-tools { width: 74px; } .t-help { width: 72px; }
.opts { margin-left: auto; display: flex; align-items: center; padding-right: 1px; height: 34px; }
.opts span { margin: 0 0 0 20px; letter-spacing: -.2px; }
.opts .od { margin: -6px 9px 0 2px; }

.ribbon { height: 123px; flex: none; display: flex; background: #f1f1f1; border-bottom: 1px solid #d8d8d8; }
.rg { margin-top: 8px; height: 108px; border-right: 1px solid #d0d0d0; display: flex; flex-direction: column; justify-content: space-between; }
.g1 { width: 109px; padding-left: 4px; } .g2 { width: 576px; } .g3 { width: 173px; padding-left: 8px; } .g4 { width: 164px; } .g5 { width: 159px; padding-left: 8px; }
.row { display: flex; margin-top: -2px; height: 91px; }
.g2 .row { padding-left: 11px; }
.rb { text-align: center; line-height: 18px; white-space: nowrap; display: flex; flex-direction: column; align-items: center; }
.rb .ic { height: 45px; margin-top: 6px; display: flex; justify-content: center; }
.rb .ic.up { height: 47px; margin-top: 4px; }
.b6 .ic.up { height: 45px; margin-top: 6px; }
.rb > span:last-of-type { margin-top: 3px; }
.g1 .rb .ic { margin-top: 4px; height: 44px; }
.rb .l1t { margin-top: 4px; height: 17px; }
.rb > .l2t:last-of-type { margin-top: 0; display: flex; align-items: center; gap: 5px; }
.b1 { width: 50px; } .b2 { width: 110px; } .b3 { width: 74px; } .b4 { width: 126px; } .b5 { width: 110px; } .b6 { width: 88px; }
.b2, .b4, .b5 { letter-spacing: -.15px; }
.cap { text-align: center; color: #666; height: 18px; line-height: 18px; }
.g2 .cap { padding-left: 4px; }
.g3 .cap { padding-right: 14px; }
.g5 .cap { padding-right: 14px; }
.gallery { width: 158px; height: 79px; border: 1px solid #aaa; background: #f8f8f8; display: flex; margin-top: -2px; }
.gallery > svg { margin-top: -1px; }
.gs { margin-left: auto; display: flex; flex-direction: column; width: 21px; border-left: 1px solid #c6c6c6; background: #fff; }
.gs i { flex: 1; border-bottom: 1px solid #c6c6c6; display: flex; align-items: center; justify-content: center; }
.gs i:last-child { border: 0; }
.paste { width: 70px; color: #9a9a9a; }
.g4 .ic svg, .g5 .ic svg { margin-top: 0; }
.col { display: flex; flex-direction: column; gap: 10px; padding-top: 5px; }
.col div { display: flex; align-items: center; height: 18px; gap: 4px; white-space: nowrap; }
.col div i { width: 20px; display: flex; justify-content: center; }
.dis { color: #9a9a9a; }
.sel { width: 57px; background: #c5c5c5; }
.sel .sm { margin-top: 11px; color: #777; }
.ed { padding-left: 4px; }
.ed div { gap: 3px; }

.bars { height: 39px; flex: none; display: flex; border-bottom: 1px solid #d6d6d6; padding: 3px 0; }
.tb { display: flex; align-items: center; height: 34px; border-right: 1px solid #bbb; }
.k1 { width: 206px; padding-left: 1px; } .k2 { width: 625px; } .k3 { width: 204px; } .k4 { width: 368px; } .k5 { width: 317px; border: 0; }
.tb i { width: 29.200px; display: flex; justify-content: center; align-items: center; height: 26px; }
.grip { width: 13.400px; height: 24px; background-image: radial-gradient(circle at 1px 1px, #777 .8px, transparent 1.100px), radial-gradient(circle at 1px 3px, #777 .8px, transparent 1.100px); background-size: 4px 4px, 4px 4px; background-position: 4px 0, 6px 0; clip-path: inset(0 3px 0 3px); }
.k3 .grip { width: 12px; }
.tb em { width: 14.600px; display: flex; justify-content: center; color: #999; }
.tb em:last-child { padding-top: 14px; }
.tb em.last { width: 26px; padding: 0; margin-left: 2px; }
.k5 .last svg { margin-top: -4px; }
.tb em.dk { color: #444; }
.tb s { width: 7.400px; height: 26px; background: linear-gradient(#ccc, #ccc) 3px 0/1px 100% no-repeat; flex: none; }
.k2 .grip { width: 14.600px; }
.cb { height: 28px; border-right: 22px solid #e6e6e6; background: #fff; display: flex; align-items: center; justify-content: flex-end; color: #bbb; }
.cb svg { margin-right: -16px; }
.c1 { width: 132px; } .c2 { width: 58px; border-right-width: 20px; }
.bx { width: 17px; height: 17px; border: 2px solid #333; color: #aaa; font: bold 13px/13px "Open Sans", sans-serif; text-align: center; letter-spacing: 0; }
.it { font-style: italic; } .un { text-decoration: underline; } .st { text-decoration: line-through; }
.tb .ul { position: relative; padding-bottom: 3px; }
.ul::after { content: ""; position: absolute; left: 4px; right: 4px; bottom: 1px; height: 4px; background: #000; }
.lg { width: 132px; height: 30px; background: #fff; border: 1px solid #ccc; color: #111; display: flex; align-items: center; justify-content: space-between; padding: 0 5px 0 3px; letter-spacing: 0; }
.lg svg { color: #555; }

.work { height: 574px; flex: none; margin-top: 6px; display: flex; }
.explorer { width: 374px; padding: 2px 2px 0 8px; }
.ph { height: 24px; display: flex; align-items: center; color: #2a579a; padding: 0 11px 0 6px; }
.ph span { flex: 1; }
.ph .p { margin-right: 10px; }
.ph svg { color: #333; }
.explorer .ph { height: 25px; padding: 0 9px 2px 7px; letter-spacing: -.2px; }
.pbody { border: 2px solid #a9abae; border-right-width: 1px; height: 547px; background: #f0f0f0; }
.ptb { display: flex; height: 35px; align-items: center; border-bottom: 1px solid #ccc; padding-left: 1px; }
.ptb i { width: 29.200px; display: flex; justify-content: center; }
.ptb s { width: 8px; height: 27px; background: linear-gradient(#ccc, #ccc) 3px 0/1px 100% no-repeat; }
.tree { margin: 4px 5px 0; height: 470px; background: #fff; border: 1px solid #7d838c; outline: 3px solid #fafafa; color: #111; font: 15px/21px "Liberation Sans", Arial, sans-serif; letter-spacing: -.52px; }
.tr { display: flex; align-items: center; height: 21.200px; }
.root { padding-left: 5px; }
.ex { width: 12px; height: 12px; border: 1px solid #888; background: #f6f6f6; color: #24469a; font: bold 12px/9px "Liberation Sans", sans-serif; text-align: center; letter-spacing: 0; }
.root .ex { margin-right: 12px; position: relative; }
.root .ex::after { content: ""; position: absolute; left: 13px; top: 5px; width: 7px; border-top: 1px dotted #999; }
.hl { background: #e3e3e3; }
.root .hl { padding: 0 5px 0 4px; margin-left: 7px; height: 21px; }
.kids { position: relative; padding-left: 31px; }
.kids::before { content: ""; position: absolute; left: 37px; top: 0; height: 244px; border-left: 1px dotted #888; }
.kids .tr > b { width: 12px; position: relative; }
.kids .tr > b::after { content: ""; position: absolute; left: 7px; width: 13px; border-top: 1px dotted #999; }
.kids .tr > b.ex::after { left: 12px; top: 5px; width: 7px; }
.kids .tr > i { position: relative; width: 22px; height: 20px; margin: 0 8px 0 9px; display: flex; justify-content: center; align-items: center; }
.s { position: absolute; right: 1px; top: -1px; }
.th em { font: bold 13px/12px "Liberation Sans", sans-serif; color: #9a2aa8; position: absolute; left: 0; top: -1px; }
.th strong { font: bold 21px/20px "Liberation Serif", serif; color: #3f76c8; padding: 5px 0 0 4px; }
.btabs { display: flex; margin-top: 4px; color: #333; font-size: 15px; letter-spacing: -.45px; }
.btabs span { display: flex; align-items: center; height: 30px; }
.btabs .on { background: #d5e8f8; width: 85px; padding-left: 9px; gap: 10px; height: 32px; }
.btabs .off { border-right: 1px solid #ccc; border-bottom: 1px solid #ccc; height: 30px; gap: 8px; padding-left: 3px; width: 125px; letter-spacing: -.15px; }

.mdi { margin-left: 5px; width: 1341px; padding-top: 3px; }
.dtabs { height: 36px; background: #fff; border-bottom: 2px solid #4a74b4; display: flex; margin-left: 3px; }
.dtabs span { width: 120px; background: #2a579a; color: #fff; display: flex; align-items: center; justify-content: space-between; padding: 0 5px 0 24px; letter-spacing: -.1px; }
.dtabs em { margin: 13px 7px 0 auto; color: #777; }
.area { background: #e6e6e6; height: 535px; padding: 3px 0 0 3px; border-bottom: 2px solid #b5b5b5; }
.win { width: 1163px; height: 530px; border: 2px solid #333; border-top-color: #555; border-radius: 8px 8px 0 0; background: linear-gradient(#9ab5d3 0, #b9d1ea 40px, #b9d1ea 110px, #dce8f4 157px, #b9d1ea 159px); padding: 0 9px; box-shadow: inset -1px 0 #5cc9e6, inset 0 1px #dfe9f5; }
.wt { height: 39px; display: flex; align-items: center; padding: 9px 3px 0 2px; color: #111; }
.wt span { flex: 1; margin-left: 6px; letter-spacing: -.35px; }
.wt b { width: 42px; height: 24px; border: 1px solid #52657f; border-radius: 2px; box-shadow: inset 0 0 0 1px #d6e4f3; background: linear-gradient(#c8daee 50%, #a0bcda 50%, #b8cfe8); display: flex; align-items: center; justify-content: center; margin: -2px 0 0 3px; }
.wt b:first-of-type svg { margin-top: 5px; }
.wt .rd { background: linear-gradient(#e09a90 45%, #bd3c22 50%, #cf6a52); border-color: #501820; box-shadow: inset 0 0 0 1px #e4a79d; }
.wc { height: 478px; background: #f0f0f0; border: 2px solid #9fa3a8; border-bottom: 0; }
.view { height: 423px; display: flex; border-top: 1px solid #fff; border-bottom: 1px solid #fff; }
.gut { background: #d0d0d0; }
.gut.l { width: 55px; border-right: 2px solid #a5a5a5; }
.gut.r { width: 54px; border-left: 2px solid #adadad; border-right: 2px solid #fff; }
.dots { flex: 1; background: #edf4fb url("data:image/svg+xml,%3Csvg xmlns='http://www.w3.org/2000/svg' width='10.600' height='10.600'%3E%3Cpath d='M1.500 1.500l2 1.500-2 1.500M9 6.500L7 8l2 1.500' fill='none' stroke='%23cddae5' stroke-width='.9'/%3E%3C/svg%3E"); }
.vs { width: 22px; display: flex; flex-direction: column; border-right: 1px solid #fff; }
.vs i { height: 22px; display: flex; align-items: center; justify-content: center; }
.vs b { flex: 1; background: #cdcdcd; }
.f { transform: rotate(180deg); }
.hs { height: 22px; display: flex; padding: 1px 22px 1px 0; border-bottom: 1px solid #fff; }
.hs b { flex: 1; background: #cdcdcd; }
.hs i { width: 23px; display: flex; align-items: center; justify-content: center; }
.tl svg { transform: rotate(-90deg); } .trt svg { transform: rotate(90deg); }
.sheet { height: 31px; border-top: 1px solid #999; display: flex; padding-left: 7px; color: #111; }
.sheet span { margin: 3px 0 0 -131px; z-index: 1; letter-spacing: -.35px; }

.panes { height: 162px; flex: none; margin-top: 4px; display: flex; gap: 6px; padding-left: 8px; }
.pane { width: 566px; }
.pane .ph { height: 27px; padding-right: 12px; }
.pb { border: 2px solid #a9abae; height: 133px; }
.pb .ptb { height: 42px; padding-bottom: 7px; border-bottom: 1px solid #aaa; padding-left: 1px; }
.pb .ptb s { height: 28px; }
.gy { color: #888; } .bl { color: #1c5fae; } .mono { filter: grayscale(1); }
.list { margin: 5px 5px 0 4px; height: 48px; border: 1px solid #7d838c; outline: 3px solid #fafafa; background: #fff; display: flex; overflow: hidden; color: #000; font: bold 15.500px/21px "Liberation Sans", Arial, sans-serif; letter-spacing: .1px; }
.items { flex: 1; }
.items div { display: flex; align-items: center; height: 21px; padding-left: 6px; margin-top: 1px; margin-bottom: -1px; }
.items .ex { margin-right: 9px; }
.items span { margin-left: 4px; padding: 0 4px; }
.lsb { width: 21px; background: #f0f0f0; display: flex; flex-direction: column; justify-content: space-between; align-items: center; padding: 9px 0 5px; }
.alog .btabs .on { width: 91px; padding-left: 5px; gap: 6px; height: 31px; letter-spacing: -.5px; }
.alog .btabs .off { width: 101px; padding-left: 3px; gap: 9px; letter-spacing: -.7px; }
.adv .ptb { padding-left: 1px; }
.alist { height: 86px; background: #fff; border-top: 1px solid #777; display: flex; padding: 2px 0 0 1px; color: #111; font: 15px/20px "Liberation Sans", Arial, sans-serif; letter-spacing: -.48px; }
.alist .hl { margin-left: 6px; padding: 0 4px; height: 21px; }
.over .pb { display: flex; width: 567px; }
.over .gut { width: 34px; border-left: 2px solid #666; }

.status { flex: 1; display: flex; align-items: center; padding-left: 5px; padding-top: 5px; white-space: nowrap; }
.s1 { width: 849px; letter-spacing: -.35px; } .s2 { width: 439px; letter-spacing: 0; } .s3 { width: 218px; letter-spacing: -.35px; } .s4 { width: 49px; letter-spacing: -.4px; }

.notes { position: absolute; inset: 0; pointer-events: none; color: #f00; }
.notes > * { position: absolute; }
.box { border: 3px solid #f00; }
.n-rib { left: 0; top: 146px; width: 1723px; height: 120px; }
.n-bar { left: 1px; top: 271px; width: 1722px; height: 34px; }
.n-exp { left: 0; top: 313px; width: 374px; height: 570px; }
.n-dia { left: 377px; top: 313px; width: 1172px; height: 570px; }
.n-pan { left: 0; top: 888px; width: 1724px; height: 100px; border-bottom: 0; }
.n-sta { left: 2px; top: 1052px; width: 1724px; height: 35px; }
.n-qat { left: 36px; top: 58px; width: 225px; height: 31px; border-bottom: 0; }
.ln { width: 3px; background: #f00; }
.l1 { left: 1448px; top: 45px; height: 101px; }
.l2 { left: 1663px; top: 45px; height: 76px; }
.l3 { left: 1626px; top: 301px; height: 103px; }
.l4 { left: 1633px; top: 788px; height: 100px; }
.l5 { left: 1616px; top: 1024px; height: 28px; }
.notes span { font-size: 25.200px; line-height: 32px; letter-spacing: .1px; white-space: nowrap; }
.x1 { left: 26px; top: 14px; } .x2 { left: 1403px; top: 11px; } .x3 { left: 1547px; top: 12px; } .x4 { left: 1575px; top: 417px; }
.x5 { left: 48px; top: 718px; } .x6 { left: 587px; top: 704px; } .x7 { left: 1557px; top: 750px; } .x8 { left: 1556px; top: 989px; }
.notes .x1 { letter-spacing: 0; } .notes .x4 { letter-spacing: -.25px; } .notes .x5, .notes .x6 { letter-spacing: .3px; }
```
